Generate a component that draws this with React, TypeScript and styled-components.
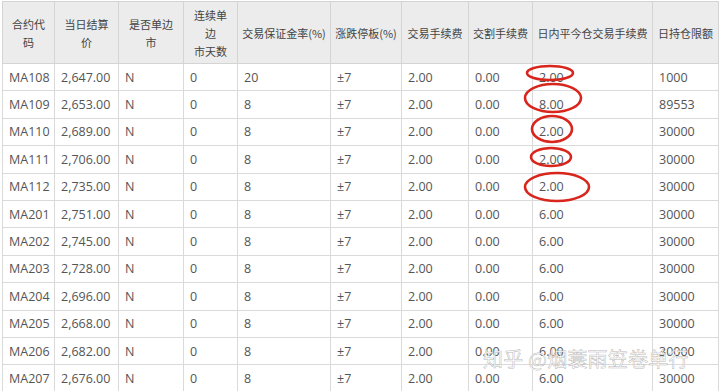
import styled, {createGlobalStyle} from 'styled-components';

const GlobalStyle = createGlobalStyle`
	body {
		margin: 0;
		background: #fff;
		font-family: 'Open Sans', 'Noto Sans CJK SC', sans-serif;
	}
`;

const Page = styled.div`
	position: relative;
	width: 720px;
	height: 391px;
	overflow: hidden;
	padding: 1px 0 0 2px;
	box-sizing: border-box;
`;

const Table = styled.table`
	border-collapse: collapse;
	table-layout: fixed;
	width: 716px;
	color: #555;
`;

const Head = styled.th`
	background: #ececec;
	border: 1px solid #d4d4d4;
	height: 61px;
	padding: 0;
	font-family: 'Noto Sans CJK SC', sans-serif;
	font-weight: 400;
	font-size: 11px;
	line-height: 18px;
	color: #444;
	text-align: center;
	white-space: nowrap;
`;

const Line = styled.span`
	display: block;
`;

const Cell = styled.td`
	border: 1px solid #dadada;
	height: 26.4px;
	padding: 0 0 0 6px;
	font-size: 12.5px;
	color: #555;
	white-space: nowrap;
`;

const Marks = styled.svg`
	position: absolute;
	left: 0;
	top: 0;
	pointer-events: none;
`;

const Watermark = styled.div`
	position: absolute;
	left: 483px;
	top: 344px;
	font-family: 'Noto Sans CJK SC', sans-serif;
	font-size: 20px;
	letter-spacing: 0.2px;
	color: rgba(255, 255, 255, 0.9);
	-webkit-text-stroke: 0.5px rgba(140, 140, 140, 0.65);
	white-space: nowrap;
`;

const widths = [52, 64, 65, 54, 93, 71, 67, 64, 120, 66];

const headers: string[][] = [
	['合约代', '码'],
	['当日结算', '价'],
	['是否单边', '市'],
	['连续单', '边', '市天数'],
	['交易保证金率(%)'],
	['涨跌停板(%)'],
	['交易手续费'],
	['交割手续费'],
	['日内平今仓交易手续费'],
	['日持仓限额'],
];

const rows: [string, string, string, string, string][] = [
	['MA108', '2,647.00', '20', '2.00', '1000'],
	['MA109', '2,653.00', '8', '8.00', '89553'],
	['MA110', '2,689.00', '8', '2.00', '30000'],
	['MA111', '2,706.00', '8', '2.00', '30000'],
	['MA112', '2,735.00', '8', '2.00', '30000'],
	['MA201', '2,751.00', '8', '6.00', '30000'],
	['MA202', '2,745.00', '8', '6.00', '30000'],
	['MA203', '2,728.00', '8', '6.00', '30000'],
	['MA204', '2,696.00', '8', '6.00', '30000'],
	['MA205', '2,668.00', '8', '6.00', '30000'],
	['MA206', '2,682.00', '8', '6.00', '30000'],
	['MA207', '2,676.00', '8', '6.00', '30000'],
];

const circles = [
	{cx: 550, cy: 73, rx: 23, ry: 7},
	{cx: 553, cy: 98, rx: 28, ry: 14},
	{cx: 552, cy: 129, rx: 20, ry: 13},
	{cx: 551, cy: 157, rx: 20, ry: 9},
	{cx: 557, cy: 187, rx: 32, ry: 14},
];

export default function App() {
	return (
		<Page>
			<GlobalStyle />
			<Table>
				<colgroup>
					{widths.map((w, i) => (
						<col key={i} style={{width: w}} />
					))}
				</colgroup>
				<thead>
					<tr>
						{headers.map((lines) => (
							<Head key={lines.join('')}>
								{lines.map((l) => (
									<Line key={l}>{l}</Line>
								))}
							</Head>
						))}
					</tr>
				</thead>
				<tbody>
					{rows.map(([code, price, margin, intraday, limit]) => (
						<tr key={code}>
							<Cell>{code}</Cell>
							<Cell>{price}</Cell>
							<Cell>N</Cell>
							<Cell>0</Cell>
							<Cell>{margin}</Cell>
							<Cell>±7</Cell>
							<Cell>2.00</Cell>
							<Cell>0.00</Cell>
							<Cell>{intraday}</Cell>
							<Cell>{limit}</Cell>
						</tr>
					))}
				</tbody>
			</Table>
			<Marks width={720} height={391}>
				{circles.map((c, i) => (
					<ellipse key={i} {...c} fill="none" stroke="#d9261c" strokeWidth={2.6} />
				))}
			</Marks>
			<Watermark>知乎 @烟蓑雨笠卷单行</Watermark>
		</Page>
	);
}
